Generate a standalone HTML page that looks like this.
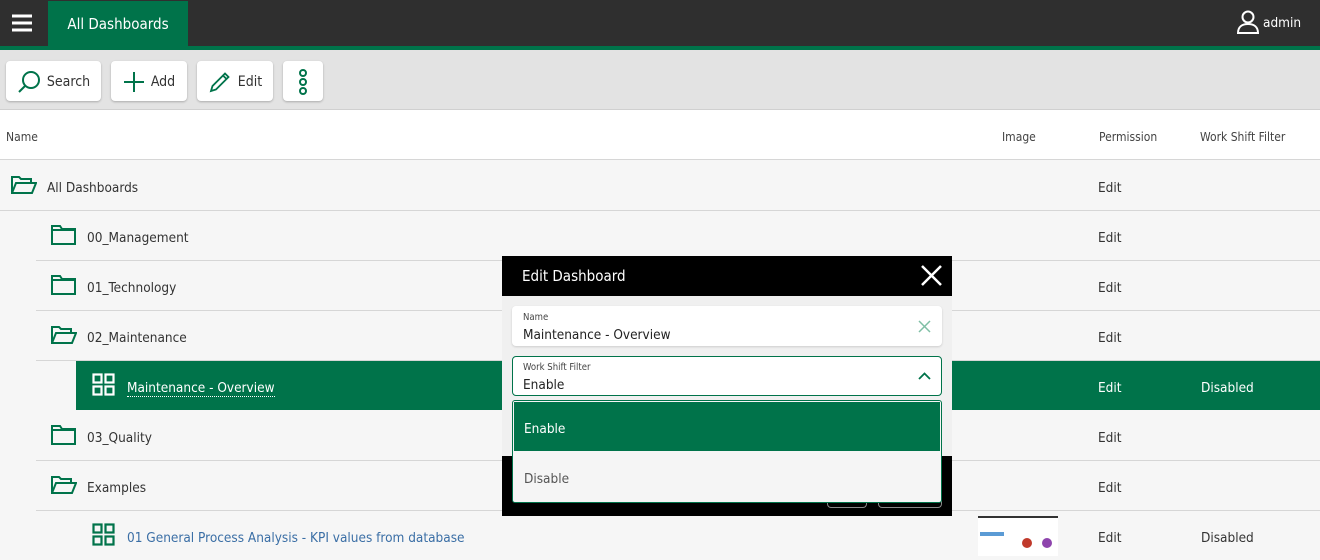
<!DOCTYPE html>
<html><head><style>
*{box-sizing:border-box;margin:0;padding:0}
body{width:1320px;height:560px;overflow:hidden;background:#f6f6f6;font-family:"DejaVu Sans Condensed","Liberation Sans",sans-serif;color:#333;position:relative;font-size:13px}
.hdr{position:absolute;left:0;top:0;width:1320px;height:46px;background:#2f2f2f}
.gl{position:absolute;left:0;top:46px;width:1320px;height:4px;background:#00734a}
.tab{position:absolute;left:48px;top:1px;width:140px;height:45px;background:#00734a;color:#fff;font-size:15px;line-height:47px;text-align:center}
.tb{position:absolute;left:0;top:50px;width:1320px;height:60px;background:#e3e3e3;border-bottom:1px solid #d0d0d0}
.btn{position:absolute;top:61px;height:40px;background:#fff;border-radius:4px;box-shadow:0 1px 2px rgba(0,0,0,.25);font-size:14px;color:#333;display:flex;align-items:center;justify-content:center;gap:6px;padding-top:2px}
.th{position:absolute;top:110px;left:0;width:1320px;height:50px;background:#fff;border-bottom:1px solid #d6d6d6;font-size:12px;color:#444}
.th span{position:absolute;top:20px}
.row{position:absolute;height:50px;border-bottom:1px solid #d6d6d6;right:0}
.t{position:absolute;font-size:13.5px;color:#333;margin-top:1px}
.e{position:absolute;left:1098px;font-size:13.5px;color:#333;margin-top:1px}
.sel{position:absolute;left:76px;top:361px;width:1244px;height:49px;background:#00734a}
</style></head><body>
<div class="hdr"></div><div class="gl"></div>
<svg style="position:absolute;left:11px;top:14px" width="22" height="18"><path d="M1 2h20M1 9h20M1 16h20" stroke="#fff" stroke-width="3"/></svg>
<div class="tab">All Dashboards</div>
<svg style="position:absolute;left:1236px;top:10px" width="24" height="25" fill="none" stroke="#fff" stroke-width="2"><circle cx="12" cy="7" r="5.5"/><path d="M2 23c0-6 4-9 10-9s10 3 10 9z"/></svg>
<div style="position:absolute;left:1263px;top:15px;color:#fff;font-size:13.5px">admin</div>
<div class="tb"></div>
<div class="btn" style="left:6px;width:95px"><svg width="24" height="24" fill="none" stroke="#00734a" stroke-width="2"><circle cx="14" cy="10" r="8"/><path d="M8 16l-6 6"/></svg>Search</div>
<div class="btn" style="left:111px;width:76px"><svg width="22" height="22" stroke="#00734a" stroke-width="2"><path d="M11 1v20M1 11h20"/></svg>Add</div>
<div class="btn" style="left:197px;width:76px"><svg width="24" height="24" fill="none" stroke="#00734a" stroke-width="1.8"><path d="M3 21l1.5-5L17 3.5l3.5 3.5L8 19.5z M15 5.5l3.5 3.5"/></svg>Edit</div>
<div class="btn" style="left:283px;width:40px"><svg width="10" height="26" fill="none" stroke="#00734a" stroke-width="2"><circle cx="5" cy="4" r="3"/><circle cx="5" cy="13" r="3"/><circle cx="5" cy="22" r="3"/></svg></div>
<div class="th"><span style="left:6px">Name</span><span style="left:1002px">Image</span><span style="left:1099px">Permission</span><span style="left:1200px">Work Shift Filter</span></div>

<div class="row" style="top:161px;left:0"></div>
<div class="row" style="top:211px;left:36px"></div>
<div class="row" style="top:261px;left:36px"></div>
<div class="row" style="top:311px;left:36px"></div>
<div class="sel"></div>
<div class="row" style="top:411px;left:36px"></div>
<div class="row" style="top:461px;left:36px"></div>

<svg style="position:absolute;left:11px;top:175px" width="26" height="20" fill="none" stroke="#00734a" stroke-width="2"><path d="M1 18V2h7l2 2h10v4M1 18l4-10h20l-4 10z"/></svg>
<div class="t" style="left:47px;top:179px">All Dashboards</div>
<svg style="position:absolute;left:51px;top:225px" width="25" height="20" fill="none" stroke="#00734a" stroke-width="2"><path d="M1 19V1h8l2 3h13v15z M1 5h23"/></svg>
<div class="t" style="left:87px;top:229px">00_Management</div>
<svg style="position:absolute;left:51px;top:275px" width="25" height="20" fill="none" stroke="#00734a" stroke-width="2"><path d="M1 19V1h8l2 3h13v15z M1 5h23"/></svg>
<div class="t" style="left:87px;top:279px">01_Technology</div>
<svg style="position:absolute;left:51px;top:325px" width="26" height="20" fill="none" stroke="#00734a" stroke-width="2"><path d="M1 18V2h7l2 2h10v4M1 18l4-10h20l-4 10z"/></svg>
<div class="t" style="left:87px;top:329px">02_Maintenance</div>
<svg style="position:absolute;left:92px;top:373px" width="24" height="24" fill="none" stroke="#fff" stroke-width="2.2"><rect x="1.5" y="1.5" width="8" height="8"/><rect x="13.5" y="1.5" width="8" height="8"/><rect x="1.5" y="13.5" width="8" height="8"/><rect x="13.5" y="13.5" width="8" height="8"/></svg>
<div class="t" style="left:127px;top:379px;color:#fff;border-bottom:1px dotted #fff;line-height:16px">Maintenance - Overview</div>
<div class="e" style="top:379px;color:#fff">Edit</div><div class="t" style="left:1201px;top:379px;color:#fff">Disabled</div>
<svg style="position:absolute;left:51px;top:425px" width="25" height="20" fill="none" stroke="#00734a" stroke-width="2"><path d="M1 19V1h8l2 3h13v15z M1 5h23"/></svg>
<div class="t" style="left:87px;top:429px">03_Quality</div>
<svg style="position:absolute;left:51px;top:475px" width="26" height="20" fill="none" stroke="#00734a" stroke-width="2"><path d="M1 18V2h7l2 2h10v4M1 18l4-10h20l-4 10z"/></svg>
<div class="t" style="left:87px;top:479px">Examples</div>
<svg style="position:absolute;left:92px;top:523px" width="24" height="24" fill="none" stroke="#00734a" stroke-width="2.2"><rect x="1.5" y="1.5" width="8" height="8"/><rect x="13.5" y="1.5" width="8" height="8"/><rect x="1.5" y="13.5" width="8" height="8"/><rect x="13.5" y="13.5" width="8" height="8"/></svg>
<div class="t" style="left:127px;top:529px;color:#3a6ea5">01 General Process Analysis - KPI values from database</div>
<div style="position:absolute;left:978px;top:516px;width:80px;height:40px;background:#fff"><div style="height:2px;background:#333"></div><div style="margin:14px 0 0 2px;width:24px;height:4px;background:#5b9bd5"></div><div style="position:absolute;left:44px;top:22px;width:10px;height:10px;border-radius:50%;background:#c0392b"></div><div style="position:absolute;left:64px;top:22px;width:10px;height:10px;border-radius:50%;background:#8e44ad"></div></div>
<div class="e" style="top:179px">Edit</div><div class="e" style="top:229px">Edit</div><div class="e" style="top:279px">Edit</div><div class="e" style="top:329px">Edit</div><div class="e" style="top:429px">Edit</div><div class="e" style="top:479px">Edit</div><div class="e" style="top:529px">Edit</div>
<div class="t" style="left:1201px;top:529px">Disabled</div>

<div style="position:absolute;left:502px;top:256px;width:450px;height:260px;background:#000"></div>
<div style="position:absolute;left:502px;top:296px;width:450px;height:160px;background:#f0f0f0"></div>
<div style="position:absolute;left:522px;top:267px;color:#fff;font-size:15px">Edit Dashboard</div>
<svg style="position:absolute;left:921px;top:265px" width="21" height="21" stroke="#fff" stroke-width="2.5"><path d="M1 1l19 19M20 1L1 20"/></svg>
<div style="position:absolute;left:827px;top:500px;width:40px;height:8px;border:1px solid #888;border-top:none;border-radius:0 0 4px 4px"></div>
<div style="position:absolute;left:878px;top:500px;width:64px;height:8px;border:1px solid #888;border-top:none;border-radius:0 0 4px 4px"></div>
<div style="position:absolute;left:512px;top:306px;width:430px;height:40px;background:#fff;border-radius:4px;box-shadow:0 1px 2px rgba(0,0,0,.15)"></div>
<div style="position:absolute;left:523px;top:312px;font-size:9.5px;color:#444">Name</div>
<div style="position:absolute;left:523px;top:327px;font-size:13.5px;color:#222">Maintenance - Overview</div>
<svg style="position:absolute;left:918px;top:320px" width="13" height="13" stroke="#7fbfa5" stroke-width="1.5"><path d="M1 1l11 11M12 1L1 12"/></svg>
<div style="position:absolute;left:512px;top:356px;width:430px;height:40px;background:#fff;border:1px solid #00734a;border-radius:4px"></div>
<div style="position:absolute;left:523px;top:362px;font-size:9.5px;color:#444">Work Shift Filter</div>
<div style="position:absolute;left:523px;top:377px;font-size:13.5px;color:#222">Enable</div>
<svg style="position:absolute;left:918px;top:372px" width="13" height="8" fill="none" stroke="#00734a" stroke-width="1.8"><path d="M1 7l5.5-5.5L12 7"/></svg>
<div style="position:absolute;left:512px;top:400px;width:430px;height:103px;background:#f5f5f5;border:1px solid #00734a;border-radius:3px"></div>
<div style="position:absolute;left:514px;top:402px;width:426px;height:49px;background:#00734a"></div>
<div style="position:absolute;left:524px;top:421px;color:#fff;font-size:13.5px">Enable</div>
<div style="position:absolute;left:524px;top:471px;color:#555;font-size:13.5px">Disable</div>
</body></html>
